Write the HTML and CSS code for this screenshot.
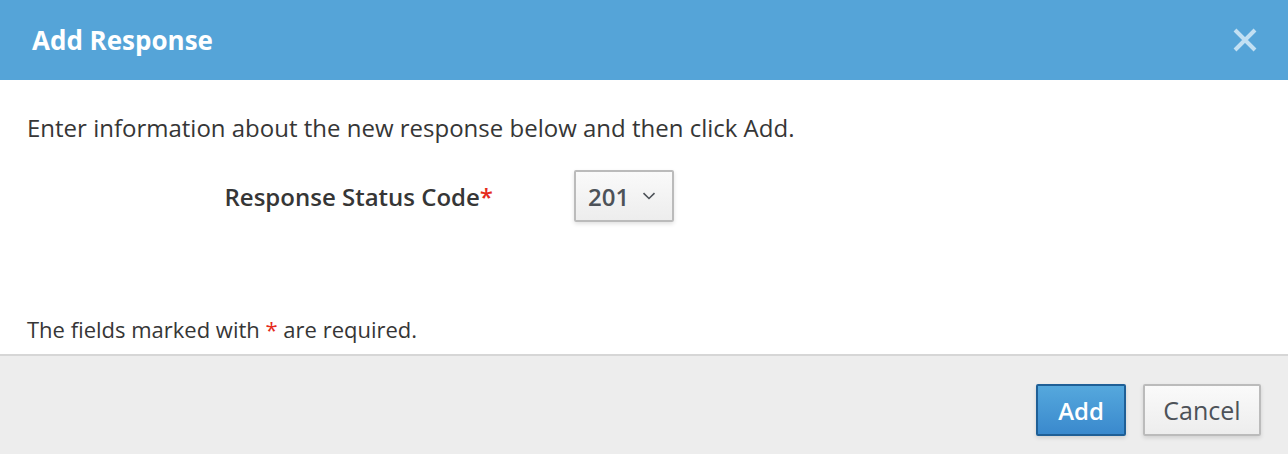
FILE: index.html
```html
<!DOCTYPE html>
<html>
<head>
<meta charset="utf-8">
<link rel="stylesheet" href="styles.css">
</head>
<body>
<div class="modal">
  <div class="modal-header">
    <h1 class="modal-title">Add Response</h1>
    <button class="close" aria-label="Close">
      <svg width="26" height="26" viewBox="0 0 26 26"><path d="M3 3 L23 23 M23 3 L3 23" stroke="#c2e0f3" stroke-width="4" stroke-linecap="butt"/></svg>
    </button>
  </div>
  <div class="modal-body">
    <p class="intro">Enter information about the new response below and then click Add.</p>
    <div class="form-row">
      <label class="form-label">Response Status Code<span class="req">*</span></label>
      <div class="select">
        <span class="select-value">201</span>
        <svg class="caret" width="14" height="8" viewBox="0 0 14 8"><path d="M1.5 1.2 L7 6.5 L12.5 1.2" fill="none" stroke="#4d5258" stroke-width="1.6"/></svg>
      </div>
    </div>
    <p class="note">The fields marked with <span class="req">*</span> are required.</p>
  </div>
  <div class="modal-footer">
    <button class="btn btn-primary">Add</button>
    <button class="btn btn-default">Cancel</button>
  </div>
</div>
</body>
</html>
```
FILE: styles.css
```css
* { box-sizing: border-box; }
html, body { margin: 0; padding: 0; }
body {
  font-family: "Open Sans", "Liberation Sans", sans-serif;
  color: #363636;
  background: #fff;
  width: 1288px;
  height: 454px;
  overflow: hidden;
}
.modal { display: flex; flex-direction: column; height: 454px; }
.modal-header {
  height: 80px;
  flex: none;
  background: #55a4d8;
  display: flex;
  align-items: center;
  justify-content: space-between;
  padding: 0 30px 0 32px;
}
.modal-title {
  margin: 0;
  color: #fff;
  font-size: 26px;
  font-weight: 700;
}
.close {
  background: none;
  border: 0;
  padding: 0;
  display: flex;
}
.modal-body {
  flex: 1;
  display: flex;
  flex-direction: column;
  padding: 30px 27px 8px;
  border-bottom: 2px solid #d6d6d6;
}
.intro { margin: 0; font-size: 24px; line-height: 36px; }
.form-row {
  display: grid;
  grid-template-columns: 466px auto;
  column-gap: 81px;
  align-items: center;
  justify-content: start;
  margin-top: 24px;
}
.form-label {
  text-align: right;
  font-size: 24px;
  font-weight: 600;
}
.req { color: #e52b1c; }
.select {
  width: 100px;
  height: 52px;
  border: 2px solid #bbb;
  border-radius: 2px;
  background: linear-gradient(#fafafa, #ededed);
  box-shadow: 0 2px 4px rgba(0,0,0,0.12);
  display: flex;
  align-items: center;
  padding-left: 12px;
  gap: 13px;
  font-size: 24px;
  font-weight: 600;
  color: #4d5258;
}
.note { margin: auto 0 0; font-size: 22px; line-height: 33px; }
.modal-footer {
  height: 98px;
  flex: none;
  background: #ededed;
  display: flex;
  justify-content: flex-end;
  align-items: flex-start;
  gap: 17px;
  padding: 28px 27px 0 0;
}
.btn {
  height: 52px;
  font-family: inherit;
  border-radius: 2px;
  box-shadow: 0 2px 4px rgba(0,0,0,0.12);
  padding: 0;
}
.btn-primary {
  width: 90px;
  font-size: 24px;
  color: #fff;
  font-weight: 600;
  background: linear-gradient(#55a8dd, #3a89cd);
  border: 2px solid #1f5f96;
}
.btn-default {
  width: 118px;
  font-size: 25px;
  color: #4d5258;
  background: linear-gradient(#fafafa, #ededed);
  border: 2px solid #bbb;
}
```
